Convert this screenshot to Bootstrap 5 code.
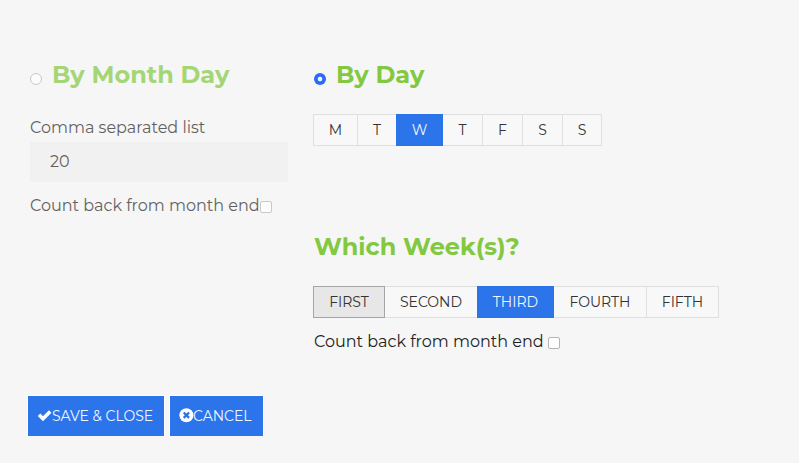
<!DOCTYPE html>
<html lang="en">
<head>
<meta charset="utf-8">
<meta name="viewport" content="width=device-width, initial-scale=1">
<title>Recurrence</title>
<link rel="stylesheet" href="https://cdn.jsdelivr.net/npm/bootstrap@5.3.0/dist/css/bootstrap.min.css">
<style>
body{background:#f6f6f6;color:#222;font-family:Montserrat,Inter,sans-serif;font-size:16px;line-height:24px;overflow:hidden}
.schedule{padding:60px 28px 0 30px;height:396px}
.month-pane{width:258px;opacity:.7}
.day-pane{margin-left:26px}
.heading{color:#82c941;font-size:24px;font-weight:700;line-height:30px;white-space:nowrap}
.choice{gap:10px;height:30px}
.choice .form-check-input{width:12px;height:12px;margin:8px 0 0;border-color:#b5b5b5}
.choice .form-check-input:checked{border:0;background:radial-gradient(circle,#fff 0 1.9px,#286bf6 2.7px)}
.tick{width:12px;height:12px;margin:7px 0 0;border:1px solid #b5b5b5;border-radius:2px!important;flex:none}
.copy{white-space:nowrap;font-weight:400}
.list-label{margin-top:26px}
.list-input{height:40px;margin-top:2px;padding:0 20px 2px;border:0;border-radius:0;background:#efefef;color:#222;font-weight:400}
.count-row{margin-top:12px}
.segments{margin:24px 0 0 -1px;height:32px}
.segments .btn{flex:none;height:32px;padding:0;border:1px solid #dfdfdf;border-radius:0;background:#f8f8f8;color:#333;font-size:14px;font-weight:400;line-height:30px}
.segments .btn+.btn{margin-left:-1px}
.segments .btn.active{background:#2b74ea;border-color:#2b74ea;color:#f1f6ff}
.segments .btn.hovered{background:#e7e7e7;border-color:#a5a5a5;z-index:1}
.w40{width:41px}.w39{width:40px}.wm{width:45px}.wt{width:40px}.ww{width:47px}
.w1{width:72px}.w2{width:94px}.w3{width:77px}.w4{width:94px}.w5{width:73px}
.week-title{margin-top:86px}
.actions{padding-left:28px;gap:6px}
.actions .btn{height:40px;padding:0 0 0 9px;border:0;border-radius:0;background:#2b74ea;box-shadow:0 0 0 1px #fdfdfd;color:#f1f6ff;font-size:14px;font-weight:400;letter-spacing:-.03px;white-space:nowrap}
.save{width:136px}.cancel{width:93px}
.actions svg{flex:none;width:15px;height:15px;margin-top:-2px}
.cancel svg{margin-right:-1px}
</style>
<script src="https://cdn.jsdelivr.net/npm/bootstrap@5.3.0/dist/js/bootstrap.bundle.min.js"></script>
</head>
<body>
<main>
<div class="schedule d-flex">
  <section class="month-pane flex-shrink-0">
    <label class="choice d-flex align-items-center"><input class="form-check-input" type="radio" name="mode"><span class="heading">By Month Day</span></label>
    <label class="copy list-label d-block" for="days">Comma separated list</label>
    <input id="days" class="form-control list-input" value="20">
    <label class="copy count-row d-flex"><span>Count back from month end</span><input class="form-check-input tick" type="checkbox"></label>
  </section>
  <section class="day-pane">
    <label class="choice d-flex align-items-center"><input class="form-check-input" type="radio" name="mode" checked><span class="heading">By Day</span></label>
    <div class="btn-group segments d-flex">
      <button class="btn wm">M</button><button class="btn wt">T</button><button class="btn ww active">W</button><button class="btn w40">T</button><button class="btn w40">F</button><button class="btn w40">S</button><button class="btn w39">S</button>
    </div>
    <div class="heading week-title">Which Week(s)?</div>
    <div class="btn-group segments d-flex">
      <button class="btn w1 hovered">FIRST</button><button class="btn w2">SECOND</button><button class="btn w3 active">THIRD</button><button class="btn w4">FOURTH</button><button class="btn w5">FIFTH</button>
    </div>
    <label class="copy count-row d-flex"><span>Count back from month end</span><input class="form-check-input tick ms-1" type="checkbox"></label>
  </section>
</div>
<div class="actions d-flex">
  <button class="btn save d-flex align-items-center"><svg viewBox="0 0 15 15"><path d="M2 6.8 6 10.8 13.2 3.6" fill="none" stroke="#fff" stroke-width="3.5"/></svg><span>SAVE &amp; CLOSE</span></button>
  <button class="btn cancel d-flex align-items-center"><svg viewBox="0 0 15 15"><circle cx="7.4" cy="7.2" r="7" fill="#fff"/><path d="m4.7 4.5 5.4 5.4m0-5.4L4.7 9.9" stroke="#2b74ea" stroke-width="2.3"/></svg><span>CANCEL</span></button>
</div>
</main>
</body>
</html>
